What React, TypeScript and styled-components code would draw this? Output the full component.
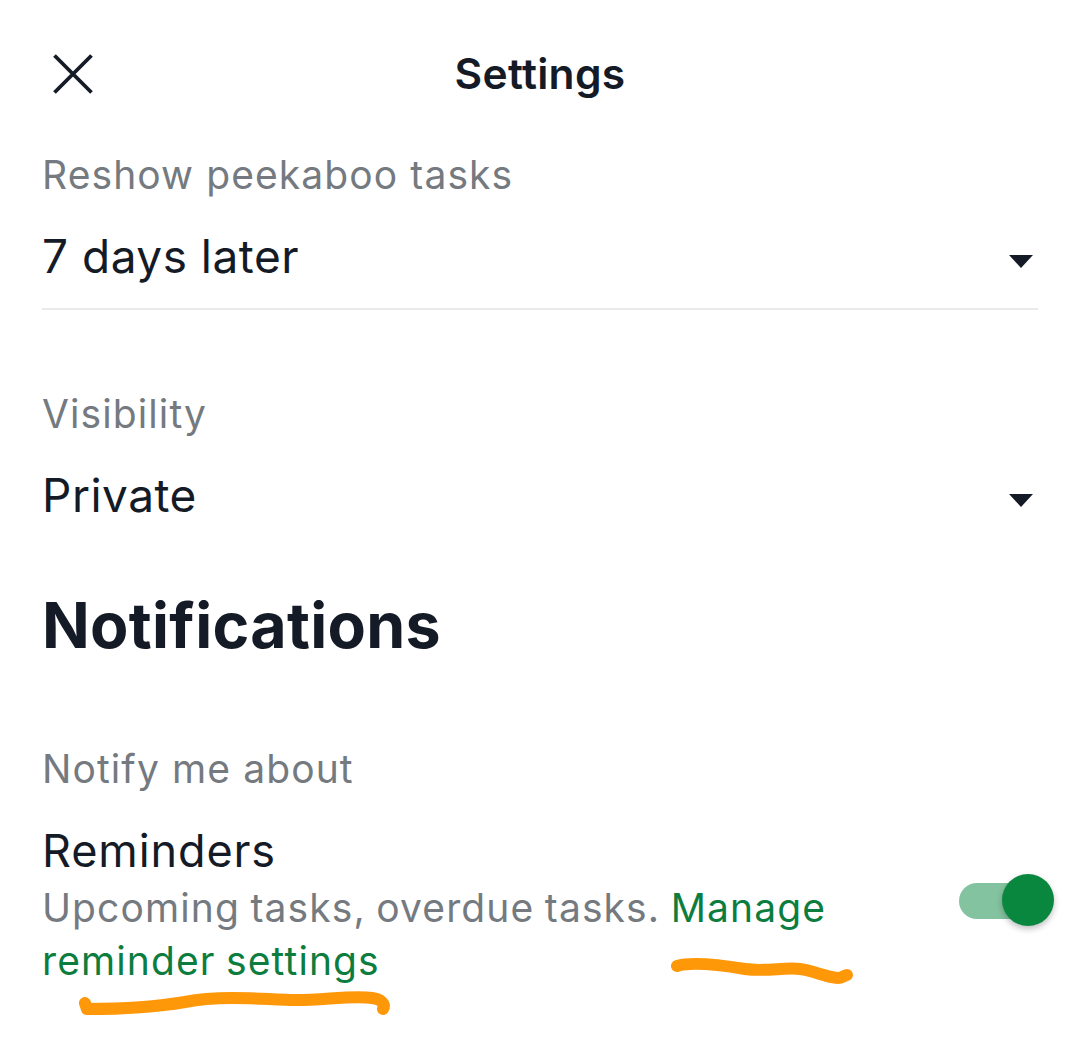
import React from 'react'
import styled, { createGlobalStyle } from 'styled-components'

const GlobalStyle = createGlobalStyle`
    html, body {
        margin: 0;
        padding: 0;
        background: #fff;
    }
    body {
        font-family: Inter, "Noto Sans", sans-serif;
        color: #151b26;
    }
`

const Page = styled.div`
    position: relative;
    width: 1080px;
    height: 1057px;
    overflow: hidden;
    background: #fff;
    box-sizing: border-box;
    padding: 0 42px;
`

const Header = styled.header`
    position: relative;
    height: 148px;
    padding-bottom: 2px;
    display: flex;
    align-items: center;
    justify-content: center;
`

const Close = styled.div`
    position: absolute;
    left: 10px;
    top: 53px;
    width: 42px;
    height: 42px;
`

const Title = styled.h1`
    margin: 0;
    font-size: 42.5px;
    line-height: 48px;
    font-weight: 600;
    letter-spacing: 0.3px;
`

const Field = styled.section<{ $border?: boolean; $height: number; $top?: number }>`
    height: ${p => p.$height}px;
    padding-top: ${p => p.$top ?? 0}px;
    box-sizing: border-box;
    border-bottom: ${p => (p.$border ? '2px solid #e8eaec' : 'none')};
`

const Label = styled.div`
    font-size: 39px;
    line-height: 50px;
    color: #747a80;
    letter-spacing: 1.1px;
`

const SelectRow = styled.div`
    margin-top: 24px;
    display: flex;
    align-items: center;
    justify-content: space-between;
`

const Value = styled.div`
    font-size: 46px;
    line-height: 64px;
    letter-spacing: 0.5px;
`

const Caret = styled.div`
    width: 0;
    height: 0;
    margin: 10px 5px 0 0;
    border-left: 12.5px solid transparent;
    border-right: 12.5px solid transparent;
    border-top: 13px solid #151b26;
`

const Heading = styled.h2`
    margin: 0;
    font-size: 62.7px;
    line-height: 76px;
    font-weight: 700;
    letter-spacing: 0.3px;
`

const NotifyLabel = styled(Label)`
    margin-top: 81px;
`

const ReminderRow = styled.div`
    margin-top: 27px;
    display: flex;
    justify-content: space-between;
`

const ReminderText = styled.div`
    width: 800px;
`

const ReminderTitle = styled.div`
    font-size: 45px;
    line-height: 60px;
    letter-spacing: 0.9px;
`

const ReminderDesc = styled.div`
    font-size: 39px;
    line-height: 53px;
    color: #747a80;
    letter-spacing: 1.1px;
    word-spacing: -1.5px;
`

const Link = styled.span`
    color: #0c7d3f;
`

const Toggle = styled.div`
    position: relative;
    width: 78px;
    height: 36px;
    margin: 62px 1px 0 0;
    border-radius: 18px;
    background: #84c3a0;
`

const Thumb = styled.div`
    position: absolute;
    left: 43px;
    top: -9px;
    width: 52px;
    height: 52px;
    border-radius: 50%;
    background: #0a873f;
    box-shadow: 0 3px 6px rgba(0, 0, 0, 0.25);
`

const Scribble = styled.svg`
    position: absolute;
    left: 0;
    top: 0;
    pointer-events: none;
`

const App: React.FC = () => {
    return (
        <>
            <GlobalStyle />
            <Page>
                <Header>
                    <Close>
                        <svg width="42" height="42" viewBox="0 0 42 42">
                            <path d="M2.5 2.5L39.5 39.5M39.5 2.5L2.5 39.5" stroke="#151b26" strokeWidth="3.8" fill="none" />
                        </svg>
                    </Close>
                    <Title>Settings</Title>
                </Header>

                <Field $border $height={160}>
                    <Label>Reshow peekaboo tasks</Label>
                    <SelectRow>
                        <Value>7 days later</Value>
                        <Caret />
                    </SelectRow>
                </Field>

                <Field $height={277} $top={79}>
                    <Label>Visibility</Label>
                    <SelectRow>
                        <Value>Private</Value>
                        <Caret />
                    </SelectRow>
                </Field>

                <Heading>Notifications</Heading>

                <NotifyLabel>Notify me about</NotifyLabel>
                <ReminderRow>
                    <ReminderText>
                        <ReminderTitle>Reminders</ReminderTitle>
                        <ReminderDesc>
                            Upcoming tasks, overdue tasks. <Link>Manage reminder settings</Link>
                        </ReminderDesc>
                    </ReminderText>
                    <Toggle>
                        <Thumb />
                    </Toggle>
                </ReminderRow>

                <Scribble width="1080" height="1057" viewBox="0 0 1080 1057">
                    <path
                        d="M677 966C690 962 715 964 745 969C765 972 785 967 800 969C815 971 825 977 838 978C842 978 845 975 847 975"
                        stroke="#ff9808"
                        strokeWidth="12"
                        strokeLinecap="round"
                        strokeLinejoin="round"
                        fill="none"
                    />
                    <path
                        d="M85 1003L87 1009C110 1009 150 1008 185 1002C215 996 250 998 290 1000C320 1001 350 995 372 998C380 999 386 1003 383 1009"
                        stroke="#ff9808"
                        strokeWidth="12"
                        strokeLinecap="round"
                        strokeLinejoin="round"
                        fill="none"
                    />
                </Scribble>
            </Page>
        </>
    )
}

export default App
